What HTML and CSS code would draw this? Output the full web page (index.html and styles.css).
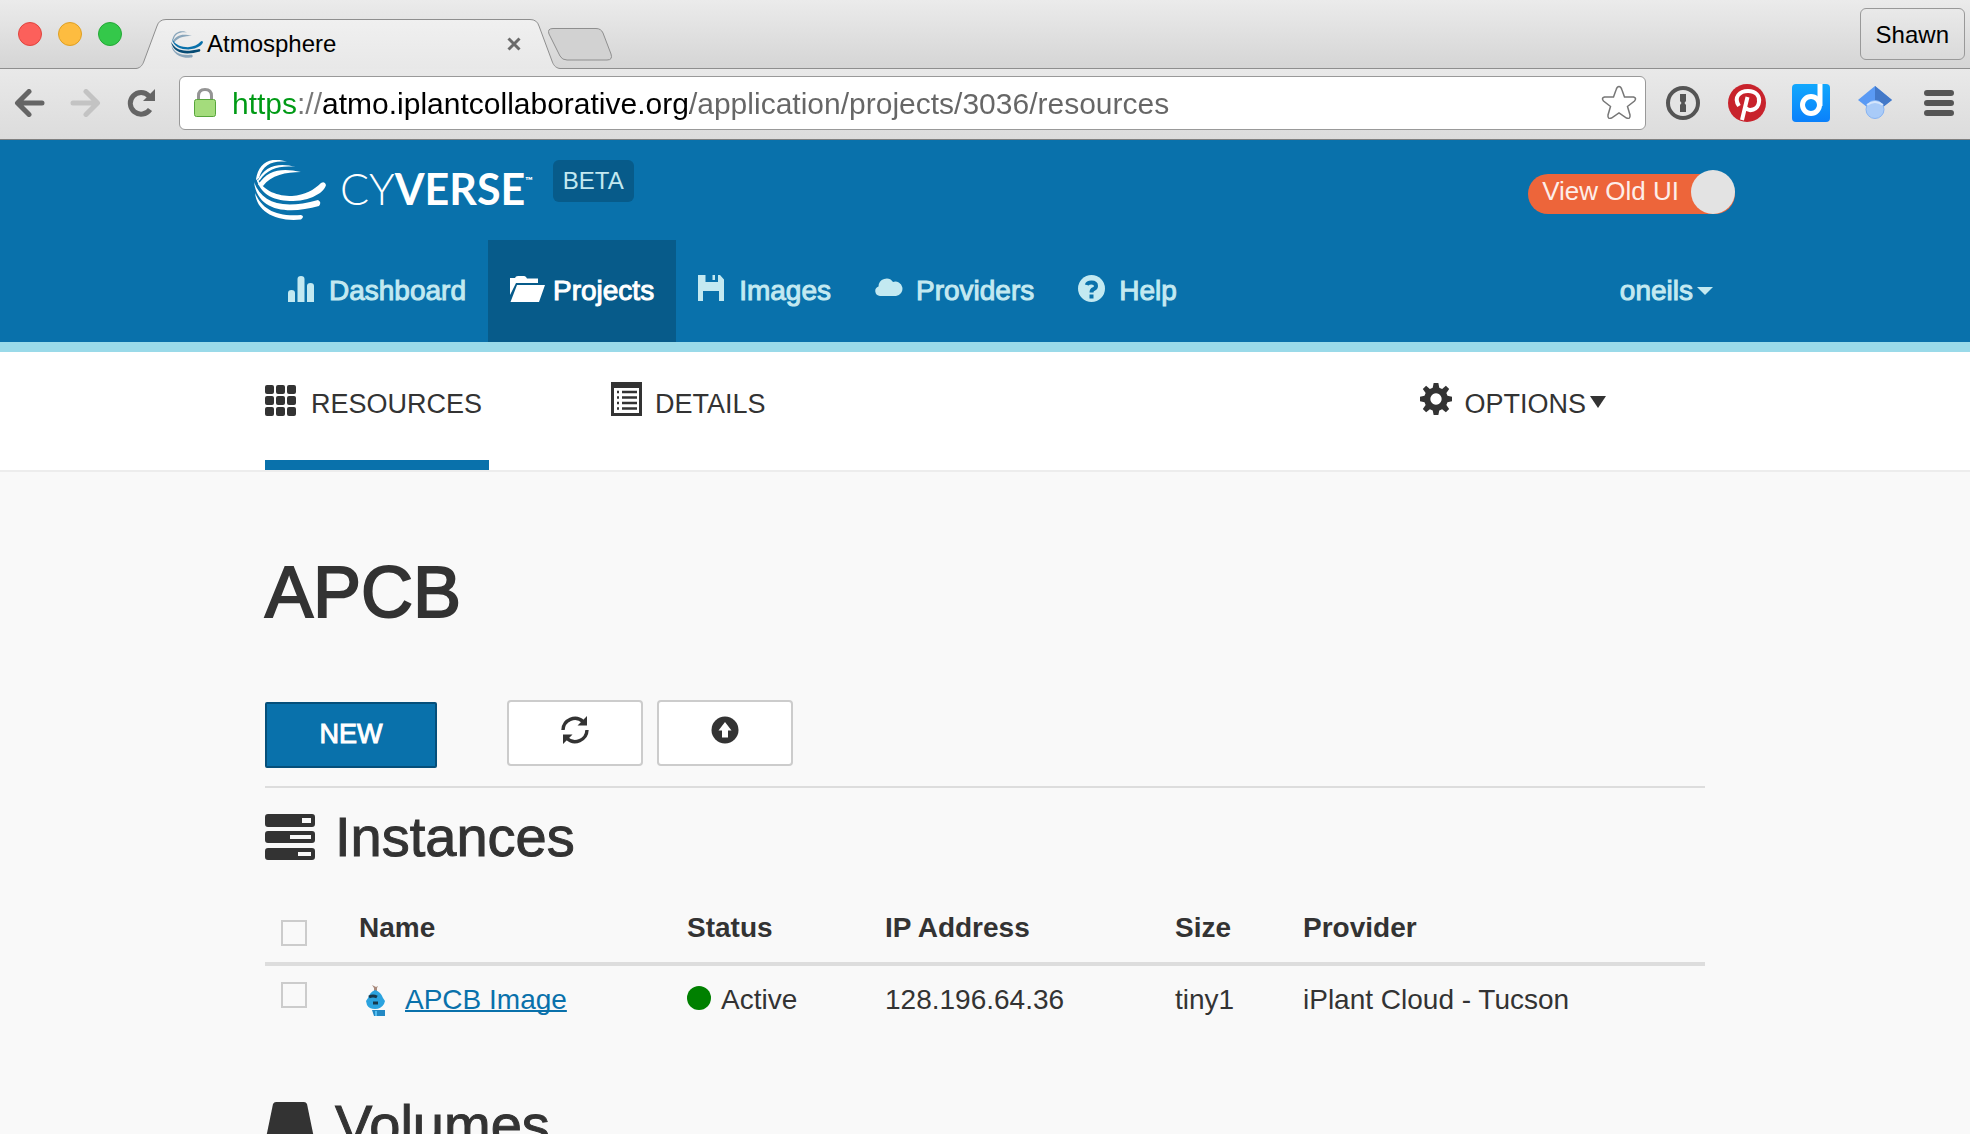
FILE: index.html
```html
<!DOCTYPE html>
<html lang="en">
<head>
<meta charset="utf-8">
<title>Atmosphere</title>
<link rel="stylesheet" href="styles.css">
</head>
<body>
<div class="chrome">
  <div class="tabstrip">
    <div class="lights">
      <button class="light light-close" aria-label="Close window"></button>
      <button class="light light-min" aria-label="Minimize window"></button>
      <button class="light light-max" aria-label="Zoom window"></button>
    </div>
    <div class="tab">
      <svg class="tab-shape" viewBox="0 0 424 50" aria-hidden="true">
        <defs><linearGradient id="tabfill" x1="0" y1="0" x2="0" y2="1"><stop offset="0" stop-color="#f0f0f0"/><stop offset="1" stop-color="#e8e8e8"/></linearGradient></defs>
        <path d="M0 49.500C5 49 7 45 8 42L21 7Q23 .5 30 .5H394Q401 .5 403 7L416 42C417 45 419 49 424 49.500V50H0Z" fill="url(#tabfill)"/>
        <path d="M0 49.500C5 49 7 45 8 42L21 7Q23 .5 30 .5H394Q401 .5 403 7L416 42C417 45 419 49 424 49.500" fill="none" stroke="#8e8e8e"/>
      </svg>
      <svg class="favicon" viewBox="0 0 72 60" aria-hidden="true">
        <g fill="#8aa6bb"><path d="M3 20C6 0 25-3 36 3 20 1 9 6 6 19Z"/><path d="M3 24C12 7 28 5 47 11 30 11 16 14 8 25Z"/><path d="M1 32C8 49 22 55 47 53q4 3 0 6.500C22 62 3 50 1 32Z"/></g>
        <path fill="#0971ab" d="M2 17C10 32 24 36 38 36 51 35 60 30 67 23q4-2 5 2 -1 4-6 8-12 8-27 8C22 41 6 36 2 17Z"/>
        <path fill="#064b74" d="M0 24C10 43 28 49 64 40q4 2 1 6C36 54 6 53 0 24Z"/>
      </svg>
      <span class="tab-title">Atmosphere</span>
      <button class="tab-close" aria-label="Close tab"><svg viewBox="0 0 14 14"><path d="M1.500 1.500l11 11M12.500 1.500l-11 11" stroke="#6b6b6b" stroke-width="3"/></svg></button>
    </div>
    <button class="newtab" aria-label="New tab"><svg viewBox="0 0 64 33"><path d="M5 .5H48Q53 .5 55 5L63 26Q65 32 59 32H19Q14 32 12 28L1 6Q-1 .5 5 .5Z" fill="#d2d2d2" stroke="#8e8e8e"/></svg></button>
    <button class="profile">Shawn</button>
  </div>
  <div class="toolbar">
    <div class="tools">
      <button class="tool" aria-label="Back"><svg viewBox="0 0 31 28"><path d="M15 2.500L3.500 14 15 25.500M4 14H28" fill="none" stroke="#656565" stroke-width="5" stroke-linecap="round" stroke-linejoin="round"/></svg></button>
      <button class="tool" aria-label="Forward"><svg viewBox="0 0 31 28"><path d="M16 2.500L27.500 14 16 25.500M27 14H3" fill="none" stroke="#c3c3c3" stroke-width="5" stroke-linecap="round" stroke-linejoin="round"/></svg></button>
      <button class="tool" aria-label="Reload"><svg viewBox="0 0 31 28"><path d="M24 20.500A10.800 10.800 0 1 1 23 7" fill="none" stroke="#656565" stroke-width="5"/><path d="M29 0V12H17Z" fill="#656565"/></svg></button>
    </div>
    <div class="urlbar">
      <svg class="lock" viewBox="0 0 22 29" aria-hidden="true"><path d="M4.500 13V8Q4.500 1.500 11 1.500T17.500 8V13" fill="none" stroke="#949494" stroke-width="3"/><rect x=".5" y="11.500" width="21" height="17" rx="2" fill="#a4dc7c" stroke="#57a53b"/></svg>
      <input class="url" type="text" aria-label="Address" value="https://atmo.iplantcollaborative.org/application/projects/3036/resources">
      <button class="star" aria-label="Bookmark"><svg viewBox="0 0 36 35"><path d="M18 1.500Q20 1.500 21 5L23.500 12H32.500Q36 13 33.500 16L26.500 21.500 29 30Q29.500 34.500 25.500 33L18 28 10.500 33Q6.500 34.500 7 30L9.500 21.500 2.500 16Q0 13 3.500 12H12.500L15 5Q16 1.500 18 1.500Z" fill="#fff" stroke="#777" stroke-width="1.500"/></svg></button>
    </div>
    <div class="extensions">
      <button class="ext" aria-label="Password manager"><svg viewBox="0 0 38 38"><circle cx="19" cy="19" r="15" fill="#e4e4e4" stroke="#555" stroke-width="4"/><path d="M16 10H22V17L20.500 19 22 21V28H16V21L17.500 19 16 17Z" fill="#555"/></svg></button>
      <button class="ext" aria-label="Pinterest"><svg viewBox="0 0 38 38"><circle cx="19" cy="19" r="19" fill="#c8232c"/><path d="M11 22C5 13 12 7 20 7 28 7 32 12 31 18 30 26 21 28 18 24M19.500 13L14 36" fill="none" stroke="#fff" stroke-width="4"/></svg></button>
      <button class="ext" aria-label="Diigo"><svg viewBox="0 0 38 38"><defs><linearGradient id="dg" x1="0" y1="0" x2="0" y2="1"><stop offset="0" stop-color="#12a8fd"/><stop offset="1" stop-color="#0a80fb"/></linearGradient></defs><rect width="38" height="38" rx="4" fill="url(#dg)"/><circle cx="19" cy="21" r="8.500" fill="none" stroke="#fff" stroke-width="5"/><path d="M28 0V22" stroke="#fff" stroke-width="5"/></svg></button>
      <button class="ext" aria-label="Scholar"><svg viewBox="0 0 38 38"><path d="M19 2L2 16 11 23H27L36 16Z" fill="#5a9af4"/><path d="M19 2L36 16 27 23 19 17Z" fill="#4278c8"/><circle cx="19" cy="25.500" r="9" fill="#a9cbf8" stroke="#86b3f2"/><path d="M11 21Q19 15 27 21" fill="none" stroke="#d4e5fc" stroke-width="2"/></svg></button>
      <button class="ext" aria-label="Menu"><svg viewBox="0 0 38 38"><path d="M7 9H31M7 19H31M7 29H31" stroke="#555" stroke-width="6" stroke-linecap="round"/></svg></button>
    </div>
  </div>
</div>

<header class="header">
  <div class="header-inner">
    <div class="brand-row">
      <a class="logo" href="#">
        <svg viewBox="0 0 72 60" aria-hidden="true"><g fill="#fff"><path d="M2 20C4 2 18-4 33 2 20 0 9 4 5 18Z"/><path d="M3 22C10 6 24 2 42 7 26 5 13 9 6 20Z"/><path d="M4 25C14 9 29 8 47 12 32 12 17 15 9 26Z"/><path d="M2 17C10 32 24 36 38 36 51 35 60 30 67 23q4-2 5 2 -1 4-6 8-12 8-27 8C22 41 6 36 2 17Z"/><path d="M0 22C8 43 28 50 64 40q4 2 1 6C36 54 4 53 0 22Z"/><path d="M1 33C8 49 22 57 47 55q4 1 0 4.500C22 62 3 52 1 33Z"/></g></svg>
        <span class="wordmark"><span class="thin">CY</span>VERSE<sup>™</sup></span>
      </a>
      <span class="beta">BETA</span>
      <label class="switch"><span>View Old UI</span><input type="checkbox" role="switch" checked></label>
    </div>
    <nav class="nav">
      <a href="#"><svg class="nav-icon" viewBox="0 0 28 28"><path d="M0 27V18Q0 15 3.500 15T7 18V27ZM9.500 27V4Q9.500 1 13 1T16.500 4V27ZM19 27V11Q19 8 22.500 8T26 11V27Z" fill="currentColor"/></svg>Dashboard</a>
      <a href="#" class="active"><svg class="nav-icon folder" viewBox="0 0 35 28"><path d="M0 3H5L6 1.500Q7 1 8 1H14Q15 1 16 2L17 3.500H28V8H6L0 20ZM7 10H35L29 27H0.500Z" fill="currentColor"/></svg>Projects</a>
      <a href="#"><svg class="nav-icon" viewBox="0 0 28 28"><path fill-rule="evenodd" d="M0 0H7.500V7H20V0H22L26 4.500V26H21V16H5V26H0ZM14.500 0H17V5H14.500Z" fill="currentColor"/></svg>Images</a>
      <a href="#"><svg class="nav-icon" viewBox="0 0 28 28"><path d="M5 21A4.900 4.900 0 0 1 3.500 11.500 8 8 0 0 1 18 7 7.200 7.200 0 1 1 21 21Z" fill="currentColor"/></svg>Providers</a>
      <a href="#"><svg class="nav-icon" viewBox="0 0 28 28"><circle cx="13.500" cy="13.500" r="13.500" fill="currentColor"/><path d="M8.800 10Q9.500 7.500 13.500 7.500 18 7.500 18 11 18 13 15.500 14.200 13.500 15 13.500 17.500M13.500 19.500V23.500" fill="none" stroke="#0971ab" stroke-width="4"/></svg>Help</a>
      <a href="#" class="user">oneils<svg class="caret" viewBox="0 0 16 8"><path d="M0 0H16L8 8Z" fill="currentColor"/></svg></a>
    </nav>
  </div>
</header>

<nav class="subnav">
  <div class="container subnav-inner">
    <a href="#" class="subtab current"><svg viewBox="0 0 32 34"><g fill="#333"><rect y="3" width="9" height="9" rx="2"/><rect x="11" y="3" width="9" height="9" rx="2"/><rect x="22" y="3" width="9" height="9" rx="2"/><rect y="14" width="9" height="9" rx="2"/><rect x="11" y="14" width="9" height="9" rx="2"/><rect x="22" y="14" width="9" height="9" rx="2"/><rect y="25" width="9" height="9" rx="2"/><rect x="11" y="25" width="9" height="9" rx="2"/><rect x="22" y="25" width="9" height="9" rx="2"/></g></svg>RESOURCES</a>
    <a href="#" class="subtab details"><svg viewBox="0 0 32 34"><path fill="#333" fill-rule="evenodd" d="M0 0H31V34H0ZM3 6V31H28V6Z"/><path d="M6 10H8M6 15.500H8M6 21H8M6 26.500H8M11 10H26M11 15.500H26M11 21H26M11 26.500H26" stroke="#333" stroke-width="2.600"/></svg>DETAILS</a>
    <button class="options"><svg viewBox="0 0 34 34"><path fill="#333" fill-rule="evenodd" d="M14.500 0h5l1 5 3 1.300L27.500 3 31 6.500l-3 4 1.200 3L34 14.500v5l-4.800 1-1.200 3 3 4-3.500 3.500-4-3-3 1.300-1 4.700h-5l-1-4.700-3-1.300-4 3L3 27.500l3-4-1.200-3L0 19.500v-5l4.800-1 1.200-3-3-4L6.500 3l4 3.300 3-1.300ZM17 11a6 6 0 1 0 .01 0Z"/></svg>OPTIONS<svg class="down" viewBox="0 0 16 12"><path d="M0 0H16L8 12Z" fill="#333"/></svg></button>
  </div>
</nav>

<main class="main">
  <div class="container">
    <h1>APCB</h1>
    <div class="actions">
      <button class="btn primary">NEW</button>
      <button class="btn" aria-label="Refresh"><svg viewBox="0 0 28 28"><path d="M2 14A12 12 0 0 1 22 5.500M26 14A12 12 0 0 1 6 22.500" fill="none" stroke="#333" stroke-width="3.400"/><path d="M26 0V9.500H16.500ZM2 28V18.500H11.500Z" fill="#333"/></svg></button>
      <button class="btn" aria-label="Move up"><svg viewBox="0 0 28 28"><circle cx="14" cy="14" r="13.500" fill="#333"/><path d="M14 6L20.500 14.500H17V21.500H11V14.500H7.500Z" fill="#fff"/></svg></button>
    </div>
    <hr>
    <section>
      <h2><svg viewBox="0 0 50 46"><path fill="#333" fill-rule="evenodd" d="M3 0H47Q50 0 50 3V10Q50 13 47 13H3Q0 13 0 10V3Q0 0 3 0ZM37 4V9H46V4ZM3 17H47Q50 17 50 20V26Q50 29 47 29H3Q0 29 0 26V20Q0 17 3 17ZM25 21V25H46V21ZM3 34H47Q50 34 50 37V43Q50 46 47 46H3Q0 46 0 43V37Q0 34 3 34ZM33 38V42H46V38Z"/></svg>Instances</h2>
      <table>
        <colgroup><col class="c-check"><col class="c-name"><col class="c-status"><col class="c-ip"><col class="c-size"><col></colgroup>
        <thead><tr><th><input type="checkbox" aria-label="Select all instances"></th><th>Name</th><th>Status</th><th>IP Address</th><th>Size</th><th>Provider</th></tr></thead>
        <tbody><tr>
          <td><input type="checkbox" aria-label="Select APCB Image"></td>
          <td><span class="cell"><svg class="robot" viewBox="0 0 22 32"><path d="M7 1L11 3 13 2 12 4V7H9V4Z" fill="#a98a7c"/><path d="M10 6Q16 8 18 14L20 17 19 20Q16 25 10 25T2 21L1 17 3 14Q5 8 10 6Z" fill="#2ba3df"/><path d="M4 13Q8 11 12 13" stroke="#16384c" stroke-width="3" fill="none"/><path d="M8 19H13" stroke="#16384c" stroke-width="3"/><path d="M7 26H20V32H9Z" fill="#2389c4"/><path d="M11 27V32" stroke="#53bdf0" stroke-width="2"/></svg><a href="#">APCB Image</a></span></td>
          <td><span class="cell status"><span class="dot"></span>Active</span></td>
          <td>128.196.64.36</td><td>tiny1</td><td>iPlant Cloud - Tucson</td>
        </tr></tbody>
      </table>
    </section>
    <section class="volumes">
      <h2><svg viewBox="0 0 50 46"><path fill="#333" d="M11 0H39Q41 0 42 2L49 36V43Q49 46 46 46H4Q1 46 1 43V36L8 2Q9 0 11 0Z"/></svg>Volumes</h2>
    </section>
  </div>
</main>
</body>
</html>
```

FILE: styles.css
```css
* { box-sizing: border-box; }

body {
  margin: 0;
  height: 100vh;
  display: flex;
  flex-direction: column;
  overflow: hidden;
  background: #f9f9f9;
  color: #333;
  font: 28px/40px "Liberation Sans", Arial, Helvetica, sans-serif;
}

button {
  margin: 0;
  padding: 0;
  border: 0;
  background: none;
  color: inherit;
  font: inherit;
}

svg { display: block; flex: none; }
a { color: inherit; text-decoration: none; }
.chrome, .header, .subnav { flex: none; }
.container { max-width: 1440px; margin: 0 auto; }

/* Browser window */
.tabstrip {
  display: flex;
  height: 69px;
  border-bottom: 1px solid #8e8e8e;
  background: linear-gradient(#ebebeb, #d5d5d5);
  color: #000;
  font-size: 24px;
}

.lights { display: flex; gap: 16px; padding: 22px 0 0 18px; }
.light { width: 24px; height: 24px; border-radius: 50%; border: 1px solid; }
.light-close { background: #fc605b; border-color: #e0443e; }
.light-min { background: #fdbc40; border-color: #dfa023; }
.light-max { background: #34c84a; border-color: #24a836; }

.tab {
  position: relative;
  display: flex;
  align-items: center;
  width: 424px;
  height: 50px;
  margin: 19px 0 0 14px;
  padding: 0 39px 0 35px;
}
.tab-shape { position: absolute; inset: 0; width: 424px; height: 50px; }
.favicon { position: relative; width: 32px; height: 27px; }
.tab-title { position: relative; flex: 1; margin-left: 4px; }
.tab-close { position: relative; }
.tab-close svg { width: 14px; height: 14px; }
.newtab { align-self: flex-start; margin: 28px 0 0 -12px; }
.newtab svg { width: 64px; height: 33px; }
.profile {
  align-self: flex-start;
  margin: 8px 5px 0 auto;
  padding: 6px 15px 4px;
  border: 1px solid #999;
  border-radius: 6px;
  background: linear-gradient(#e9e9e9, #dadada);
}

.toolbar {
  display: flex;
  align-items: center;
  gap: 22px;
  height: 71px;
  padding: 0 12px 3px 14px;
  border-bottom: 1px solid #7f7f7f;
  background: linear-gradient(#e9e9e9, #dcdcdc);
}
.tools { display: flex; gap: 25px; }
.tool svg { width: 31px; height: 28px; }
.urlbar {
  display: flex;
  flex: 1;
  align-items: center;
  height: 54px;
  padding: 0 8px 0 14px;
  border: 1px solid #999;
  border-radius: 6px;
  background: #fff;
}
.lock { width: 22px; height: 29px; }
.url {
  flex: 1;
  min-width: 0;
  height: 44px;
  margin-left: 16px;
  padding: 2px 0 0;
  border: 0;
  outline: 0;
  font: 30px "Liberation Sans", Arial, sans-serif;
  color: transparent;
  background: linear-gradient(90deg, #009a15 65px, #777 65px 90px, #000 90px 458px, #666 458px);
  -webkit-background-clip: text;
  background-clip: text;
}
.star svg { width: 36px; height: 35px; }
.extensions { display: flex; gap: 26px; margin-left: -4px; }
.ext svg { width: 38px; height: 38px; }

/* Site header */
.header {
  padding: 20px 0 0;
  border-bottom: 10px solid #9adae9;
  background: #0971ab;
  color: #c3e9f1;
}
.header-inner { max-width: 1500px; margin: 0 auto; }
.brand-row { display: flex; align-items: flex-start; padding-left: 19px; }
.logo { display: flex; gap: 14px; color: #fff; }
.logo > svg { width: 72px; height: 60px; }
.wordmark { display: flex; font: 700 43px/58px Lato, sans-serif; }
.thin { font-weight: 300; }
.wordmark sup { font-size: 10px; line-height: 40px; }
.beta {
  margin-left: 20px;
  padding: 1px 10px;
  border-radius: 6px;
  background: #075b8a;
  font-size: 24px;
}
.switch {
  display: flex;
  height: 40px;
  margin: 14px 0 0 auto;
  padding-left: 14px;
  border-radius: 20px;
  background: #ed653a;
  color: #fdeee9;
  font-size: 26px;
  line-height: 34px;
}
.switch input {
  appearance: none;
  width: 44px;
  height: 44px;
  margin: -4px 0 0 12px;
  border-radius: 50%;
  background: #e3e3e3;
}
.nav { display: flex; margin-top: 20px; padding: 0 0 0 31px; }
.nav a {
  display: flex;
  align-items: center;
  height: 102px;
  padding: 0 22px;
  -webkit-text-stroke: 1px currentColor;
}
.nav a.active { background: #075b8a; color: #fff; }
.nav-icon { width: 28px; height: 28px; margin: 0 13px 4px 0; }
.nav-icon.folder { width: 35px; margin-right: 8px; }
.nav a.user { margin-left: auto; }
.caret { width: 16px; height: 8px; margin-left: 4px; }

/* Project tabs */
.subnav { border-bottom: 2px solid #ededed; background: #fff; }
.subnav-inner { display: flex; font-size: 27px; }
.subtab, .options {
  display: flex;
  align-items: center;
  height: 118px;
  gap: 14px;
  padding-bottom: 4px;
  border-bottom: 10px solid transparent;
}
.subtab svg, .options svg { width: 32px; height: 34px; margin-bottom: 10px; }
.subtab.current { width: 224px; border-color: #0971ab; }
.details { gap: 12px; margin-left: 122px; }
.options { gap: 12px; margin: 0 99px 0 auto; }
.options svg.down { width: 16px; height: 12px; margin: 0 0 4px -8px; }

/* Project page */
.main { padding-top: 80px; }
h1, h2 { margin: 0; font-weight: 400; }
h1 { font-size: 72px; line-height: 80px; -webkit-text-stroke: 2px #333; }
.actions { display: flex; gap: 14px; margin-top: 68px; }
.btn {
  display: flex;
  justify-content: center;
  width: 136px;
  height: 66px;
  padding-top: 14px;
  border: 2px solid #ccc;
  border-radius: 4px;
  background: #fff;
}
.btn svg { width: 28px; height: 28px; }
.btn.primary {
  width: 172px;
  margin: 2px 56px 0 0;
  padding-top: 10px;
  border-color: #054f7a;
  border-radius: 2px;
  background: #0971ab;
  color: #fff;
  font-size: 27px;
  -webkit-text-stroke: 1px #fff;
}
hr { margin: 18px 0; border: 0; border-top: 2px solid #ddd; }
h2 {
  display: flex;
  align-items: center;
  gap: 20px;
  font-size: 56px;
  line-height: 62px;
  -webkit-text-stroke: 1px #333;
}
h2 svg { width: 50px; height: 46px; }
.volumes { margin-top: 60px; }

table {
  width: 100%;
  margin-top: 20px;
  border-collapse: collapse;
  table-layout: fixed;
  text-align: left;
}
.c-check { width: 94px; }
.c-name { width: 328px; }
.c-status { width: 198px; }
.c-ip { width: 290px; }
.c-size { width: 128px; }
th { padding: 20px 0 14px; border-bottom: 4px solid #ddd; vertical-align: top; }
td { padding: 14px 0; vertical-align: top; }
table input {
  display: block;
  appearance: none;
  width: 26px;
  height: 26px;
  margin: 2px 0 0 16px;
  border: 2px solid #ccc;
}
th input { margin-top: 12px; }
.cell { display: flex; align-items: center; gap: 18px; }
.robot { width: 22px; height: 32px; margin-left: 6px; }
.cell a {
  color: #0971ab;
  text-decoration: underline;
  text-decoration-thickness: 2px;
  text-decoration-skip-ink: none;
}
.status { gap: 10px; }
.dot { width: 24px; height: 24px; margin-bottom: 4px; border-radius: 50%; background: #008000; }
```
